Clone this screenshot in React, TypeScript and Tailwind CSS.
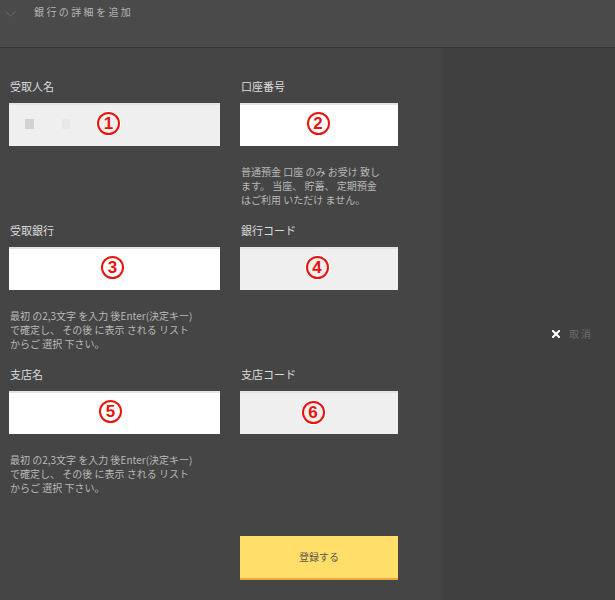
import React from "react";

type FieldProps = {
  label: string;
  mark: string;
  markClass: string;
  filled?: boolean;
  help?: string[];
  children?: React.ReactNode;
};

function Field({ label, mark, markClass, filled, help, children }: FieldProps) {
  return (
    <div className="flex h-[144px] flex-col">
      <p className="h-[16px] pl-[1px] pt-[1px] text-[11px] leading-[16px] text-[#dcdcdc]">
        {label}
      </p>
      <div
        className={`relative mt-[10px] flex h-[43px] items-center justify-center border-t-2 border-[#e4e4e4] ${
          filled ? "bg-[#efefef]" : "bg-white"
        }`}
      >
        {children}
        <span
          className={`flex h-[23px] w-[23px] items-center justify-center rounded-full border-[2.5px] border-[#e8140c] font-['Liberation_Sans',sans-serif] text-[17px] leading-none font-bold text-[#e8140c] shadow-[0_0_0_1px_#fff] ${markClass}`}
        >
          {mark}
        </span>
      </div>
      {help ? (
        <p className="mt-[19px] pl-[1px] text-[10px] leading-[14px] whitespace-nowrap text-[#b9b9b9]">
          {help.map((line) => (
            <span key={line} className="block">
              {line}
            </span>
          ))}
        </p>
      ) : null}
    </div>
  );
}

const branchHelp = [
  "最初 の2,3文字 を入力 後Enter(決定キー)",
  "で確定し、 その後 に表示 される リスト",
  "からご 選択 下さい。",
];

export default function App() {
  return (
    <div className="flex h-[600px] w-full flex-col overflow-hidden bg-[#454545] font-['Noto_Sans_CJK_JP','Noto_Sans',sans-serif]">
      <header className="flex h-[48px] shrink-0 items-start border-b border-[#343434] bg-[#4a4a4a]">
        <svg
          width="11"
          height="6"
          viewBox="0 0 11 6"
          className="mt-[11px] ml-[5px]"
          fill="none"
          stroke="#6e6e6e"
          strokeWidth="1"
        >
          <polyline points="0.5,0.5 5.5,5 10.5,0.5" />
        </svg>
        <h1 className="mt-[4px] ml-[18px] text-[10px] leading-[16px] tracking-[2.4px] text-[#b4b4b4]">
          銀行の詳細を追加
        </h1>
      </header>

      <div className="flex flex-1">
        <main className="w-[443px] shrink-0 pt-[29px] pl-[9px]">
          <div className="grid grid-cols-[211px_158px] gap-x-[20px]">
            <Field label="受取人名" mark="1" markClass="-translate-x-[6px] -translate-y-[2px]" filled>
              <span className="absolute top-[14px] left-[16px] h-[10px] w-[9px] bg-[#d3d3d3]" />
              <span className="absolute top-[14px] left-[53px] h-[10px] w-[8px] bg-[#e8e8e8]" />
            </Field>
            <Field
              label="口座番号"
              mark="2"
              markClass="-translate-x-[1px] -translate-y-[2px]"
              help={[
                "普通預金 口座 のみ お受け 致し",
                "ます。 当座、 貯蓄、 定期預金",
                "はご利用 いただけ ません。",
              ]}
            />
            <Field label="受取銀行" mark="3" markClass="-translate-x-[2px] -translate-y-[2px]" help={branchHelp} />
            <Field label="銀行コード" mark="4" markClass="-translate-x-[2px] -translate-y-[2px]" filled />
            <Field label="支店名" mark="5" markClass="-translate-x-[4px] -translate-y-[2px]" help={branchHelp} />
            <Field label="支店コード" mark="6" markClass="-translate-x-[6px] -translate-y-[1px]" filled />
            <div />
            <div className="pt-[27px]">
              <button
                type="button"
                className="flex h-[44px] w-full items-center justify-center border-b-2 border-[#f5a23a] bg-[#ffde6a] pb-[2px] text-[10px] text-[#5b5a4a]"
              >
                登録する
              </button>
            </div>
          </div>
        </main>

        <aside className="flex flex-1 items-start justify-end bg-[#404040] pt-[279px] pr-[22px]">
          <div className="flex items-center gap-[9px]">
            <svg
              width="8"
              height="8"
              viewBox="0 0 8 8"
              stroke="#ffffff"
              strokeWidth="2"
              strokeLinecap="square"
            >
              <line x1="1" y1="1" x2="7" y2="7" />
              <line x1="7" y1="1" x2="1" y2="7" />
            </svg>
            <span className="text-[10px] leading-[14px] tracking-[2px] text-[#6b6b6b]">
              取消
            </span>
          </div>
        </aside>
      </div>
    </div>
  );
}
